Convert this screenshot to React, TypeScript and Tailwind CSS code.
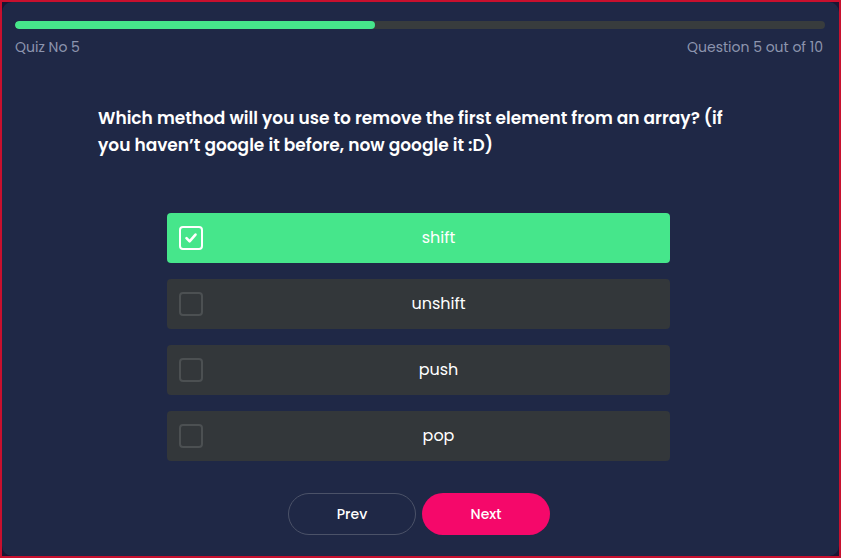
import React from "react";

const options = ["shift", "unshift", "push", "pop"];

export default function App() {
  const selected = 0;
  return (
    <div
      className="w-[841px] h-[558px] bg-[#c8102e] p-[2px]"
      style={{ fontFamily: "Poppins, 'Open Sans', 'Noto Sans', sans-serif" }}
    >
      <div className="w-full h-full bg-[#1a1533]">
        <div className="w-full h-full bg-[#1f2846] rounded-[10px] flex flex-col pl-[13px] pr-[14px] pt-[19px]">
          <div className="h-[8px] w-full rounded-full bg-[#383c3d] overflow-hidden">
            <div className="h-full w-[44.4%] rounded-full bg-[#46e68b]" />
          </div>
          <div className="flex justify-between mt-[9px] text-[14px] text-[#8d95ae] leading-[18px]">
            <span>Quiz No 5</span>
            <span className="pr-[2px]">Question 5 out of 10</span>
          </div>
          <div className="mt-[49px] ml-[83px] w-[640px] text-[17px] leading-[27px] font-semibold text-white">
            Which method will you use to remove the first element from an array? (if you haven’t google it before, now google it :D)
          </div>
          <div className="mt-[54px] ml-[152px] flex flex-col gap-[16px]">
            {options.map((o, i) => (
              <div
                key={o}
                className={
                  "relative w-[503px] h-[50px] rounded-[4px] flex items-center justify-center pl-[40px] " +
                  (i === selected ? "bg-[#46e68b]" : "bg-[#33373a]")
                }
              >
                <div
                  className={
                    "absolute left-[12px] top-[13px] w-[24px] h-[24px] rounded-[4px] border-2 flex items-center justify-center " +
                    (i === selected ? "border-white" : "border-[#4c5052]")
                  }
                >
                  {i === selected && (
                    <svg width="14" height="14" viewBox="0 0 14 14" fill="none">
                      <path d="M2.5 7.2 L5.6 10.3 L11.5 3.6" stroke="white" strokeWidth="2.6" strokeLinecap="round" strokeLinejoin="round" />
                    </svg>
                  )}
                </div>
                <span className="text-[16px] font-normal text-white">{o}</span>
              </div>
            ))}
          </div>
          <div className="mt-[32px] flex justify-center gap-[6px] pr-[2px]">
            <button className="w-[128px] h-[42px] rounded-full border border-[#4b5268] text-white text-[14px] font-medium">
              Prev
            </button>
            <button className="w-[128px] h-[42px] rounded-full bg-[#f5086a] text-white text-[14px] font-medium">
              Next
            </button>
          </div>
        </div>
      </div>
    </div>
  );
}
